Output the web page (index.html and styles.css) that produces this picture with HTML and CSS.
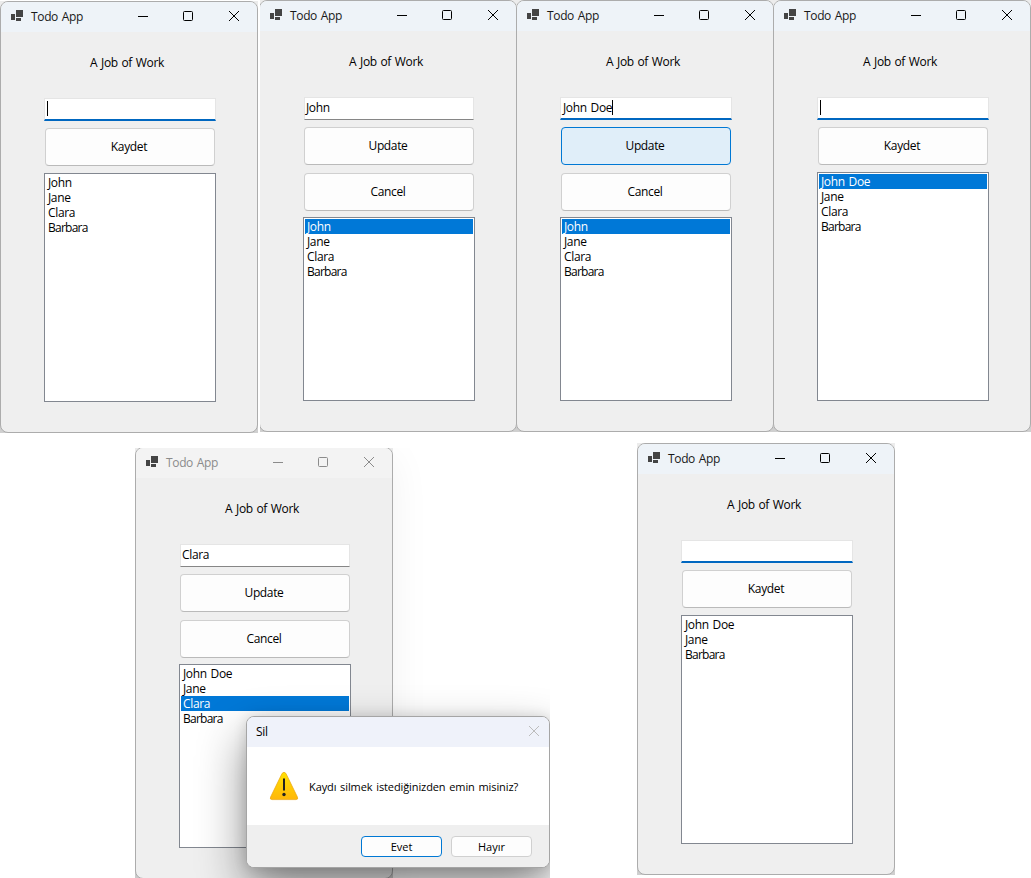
FILE: index.html
```html
<!DOCTYPE html>
<html lang="tr">
<head>
<meta charset="utf-8">
<title>Todo App</title>
<link rel="stylesheet" href="styles.css">
</head>
<body>
<svg width="0" height="0" class="defs">
  <symbol id="app" viewBox="0 0 12 12"><path fill="#444" d="M5 0h7v7H5zM0 4h4v6H0zM5 8h5v3H5z"/></symbol>
  <symbol id="min" viewBox="0 0 12 12"><path stroke="currentColor" d="M1 6.5h10"/></symbol>
  <symbol id="max" viewBox="0 0 12 12"><rect x="1.5" y="1.5" width="9" height="9" rx="1" fill="none" stroke="currentColor"/></symbol>
  <symbol id="close" viewBox="0 0 12 12"><path stroke="currentColor" fill="none" d="M1 1l10 10M11 1L1 11"/></symbol>
</svg>
<main class="desktop">
  <div class="frame f2"><section class="window">
    <header class="titlebar"><svg class="app"><use href="#app"/></svg><span class="title">Todo App</span><svg class="ctl"><use href="#min"/></svg><svg class="ctl"><use href="#max"/></svg><svg class="ctl"><use href="#close"/></svg></header>
    <div class="content"><div class="label">A Job of Work</div>
      <div class="input">John</div><div class="button">Update</div><div class="button second">Cancel</div>
      <ul class="list"><li class="selected">John</li><li>Jane</li><li>Clara</li><li class="tight">Barbara</li></ul></div>
  </section></div>
  <div class="frame f1"><section class="window">
    <header class="titlebar"><svg class="app"><use href="#app"/></svg><span class="title">Todo App</span><svg class="ctl"><use href="#min"/></svg><svg class="ctl"><use href="#max"/></svg><svg class="ctl"><use href="#close"/></svg></header>
    <div class="content"><div class="label">A Job of Work</div>
      <div class="input focus"><i class="caret"></i></div><div class="button">Kaydet</div>
      <ul class="list"><li>John</li><li>Jane</li><li>Clara</li><li class="tight">Barbara</li></ul></div>
  </section></div>
  <div class="frame f3"><section class="window">
    <header class="titlebar"><svg class="app"><use href="#app"/></svg><span class="title">Todo App</span><svg class="ctl"><use href="#min"/></svg><svg class="ctl"><use href="#max"/></svg><svg class="ctl"><use href="#close"/></svg></header>
    <div class="content"><div class="label">A Job of Work</div>
      <div class="input focus">John Doe<i class="caret"></i></div><div class="button hot">Update</div><div class="button second">Cancel</div>
      <ul class="list"><li class="selected">John</li><li>Jane</li><li>Clara</li><li class="tight">Barbara</li></ul></div>
  </section></div>
  <div class="frame f4"><section class="window">
    <header class="titlebar"><svg class="app"><use href="#app"/></svg><span class="title">Todo App</span><svg class="ctl"><use href="#min"/></svg><svg class="ctl"><use href="#max"/></svg><svg class="ctl"><use href="#close"/></svg></header>
    <div class="content"><div class="label">A Job of Work</div>
      <div class="input focus"><i class="caret"></i></div><div class="button">Kaydet</div>
      <ul class="list"><li class="selected">John Doe</li><li>Jane</li><li>Clara</li><li class="tight">Barbara</li></ul></div>
  </section></div>
  <div class="scene">
    <div class="frame f5"><section class="window inactive">
      <header class="titlebar"><svg class="app"><use href="#app"/></svg><span class="title">Todo App</span><svg class="ctl"><use href="#min"/></svg><svg class="ctl"><use href="#max"/></svg><svg class="ctl"><use href="#close"/></svg></header>
      <div class="content"><div class="label">A Job of Work</div>
        <div class="input">Clara</div><div class="button">Update</div><div class="button second">Cancel</div>
        <ul class="list"><li>John Doe</li><li>Jane</li><li class="selected">Clara</li><li class="tight">Barbara</li></ul></div>
    </section></div>
    <section class="dialog">
      <header class="dialog-title"><span>Sil</span><svg class="dialog-close"><use href="#close"/></svg></header>
      <div class="dialog-body">
        <svg class="warning" viewBox="0 0 30 30"><defs><linearGradient id="gold" x2="0" y2="1"><stop stop-color="#ffe100"/><stop offset="1" stop-color="#ffb70a"/></linearGradient></defs><path d="M13 2.6Q15 -.3 17 2.6L28.3 25.8Q29.6 28.5 27 28.6H3Q.4 28.5 1.7 25.8Z" fill="url(#gold)" stroke="#eba512" stroke-width=".7"/><path d="M15 7.5v12" stroke="#222" stroke-width="2"/><circle cx="15" cy="23.5" r="1.7" fill="#222"/></svg>
        <span>Kaydı silmek istediğinizden emin misiniz?</span>
      </div>
      <footer class="dialog-footer"><div class="small primary">Evet</div><div class="small">Hayır</div></footer>
    </section>
  </div>
  <div class="frame f6"><section class="window">
    <header class="titlebar"><svg class="app"><use href="#app"/></svg><span class="title">Todo App</span><svg class="ctl"><use href="#min"/></svg><svg class="ctl"><use href="#max"/></svg><svg class="ctl"><use href="#close"/></svg></header>
    <div class="content"><div class="label">A Job of Work</div>
      <div class="input focus"></div><div class="button">Kaydet</div>
      <ul class="list"><li>John Doe</li><li>Jane</li><li class="tight">Barbara</li></ul></div>
  </section></div>
</main>
</body>
</html>
```
FILE: styles.css
```css
* { box-sizing: border-box; }
body { margin: 0; background: #fff; font: 12px/15px "Open Sans", "Noto Sans", sans-serif; letter-spacing: -0.35px; word-spacing: 1px; color: #000; }
.defs { position: absolute; }
.desktop { position: relative; width: 1031px; height: 878px; overflow: hidden; }
.frame { position: absolute; width: 258px; height: 432px; background: linear-gradient(#ececec 50%, #cfcfcf 50%); }
.f1 { left: 0; top: 1px; }
.f2 { left: 259px; top: 0; clip-path: inset(0 0 0 1px); }
.f3 { left: 516px; top: 0; }
.f4 { left: 773px; top: 0; }
.f5 { left: 0; top: -1px; }
.f6 { left: 637px; top: 443px; }
.scene { position: absolute; left: 135px; top: 448px; width: 415px; height: 430px; overflow: hidden; }
.window { width: 258px; height: 432px; border: 1px solid #acacac; border-radius: 8px; background: #efefef; overflow: hidden; display: flex; flex-direction: column; }
.f5 .window { box-shadow: 0 10px 40px rgba(0, 0, 0, .06); }
.titlebar { height: 30px; flex: none; background: #eef3f8; display: flex; align-items: center; padding: 0 17px 2px 10px; color: #000; }
.app { width: 12px; height: 12px; margin: 0 8px 0 0; }
.title { flex: 1; padding-top: 1px; color: #191919; }
.ctl { width: 12px; height: 12px; margin-left: 34px; }
.title + .ctl { margin-left: 0; }
.title + .ctl + .ctl { margin-left: 33px; }
.inactive .titlebar { background: #f3f3f3; color: #8b8b8b; }
.inactive .title { color: #8b8b8b; }
.content { flex: 1; display: flex; flex-direction: column; padding: 23px 41px 30px 43px; }
.label { height: 15px; margin: 0 0 28px 46px; white-space: nowrap; }
.input { height: 23px; flex: none; margin: 0 1px 0 1px; padding: 2px 0 0 1px; background: #fff; border: 1px solid #e5e5e5; border-bottom-color: #868686; display: flex; }
.input.focus { margin: 0; padding-left: 2px; border-bottom: 2px solid #0067c0; height: 23px; }
.caret { width: 1px; height: 15px; background: #000; }
.button { height: 38px; flex: none; margin: 7px 1px 0; display: flex; align-items: center; justify-content: center; padding: 0 2px 2px 0; border: 1px solid #d0d0d0; border-bottom-color: #bababa; border-radius: 4px; background: #fdfdfd; }
.button.second { margin-top: 8px; }
.button.hot { background: #e0eef9; border-color: #0078d4; }
.list { flex: 1; margin: 7px 0 0; padding: 1px; border: 1px solid #828790; background: #fff; list-style: none; }
.second + .list { margin-top: 6px; }
.list li { height: 15px; padding-left: 2px; line-height: 15px; }
.list .tight { letter-spacing: -0.75px; }
.list .selected { background: #0078d7; color: #fff; }
.dialog { position: absolute; left: 111px; top: 268px; width: 304px; height: 152px; border: 1px solid #a5a5a5; border-radius: 8px; background: #fff; box-shadow: 0 22px 48px rgba(0, 0, 0, .46), 0 1px 14px rgba(0, 0, 0, .14); overflow: hidden; display: flex; flex-direction: column; }
.dialog-title { height: 30px; background: #eff2fa; display: flex; align-items: center; justify-content: space-between; padding: 0 9px 2px 9px; }
.dialog-close { width: 12px; height: 12px; color: #bcbcbc; }
.dialog-body { height: 78px; display: flex; align-items: center; padding-left: 22px; font-size: 11px; letter-spacing: -0.1px; }
.warning { width: 30px; height: 30px; margin-right: 10px; }
.dialog-footer { flex: 1; background: #efefef; display: flex; justify-content: flex-end; gap: 9px; padding: 11px 17px 0 0; font-size: 11px; letter-spacing: 0; }
.small { width: 81px; height: 21px; border: 1px solid #d0d0d0; border-radius: 4px; background: #fdfdfd; display: flex; align-items: center; justify-content: center; }
.small.primary { border-color: #0078d4; }
```
